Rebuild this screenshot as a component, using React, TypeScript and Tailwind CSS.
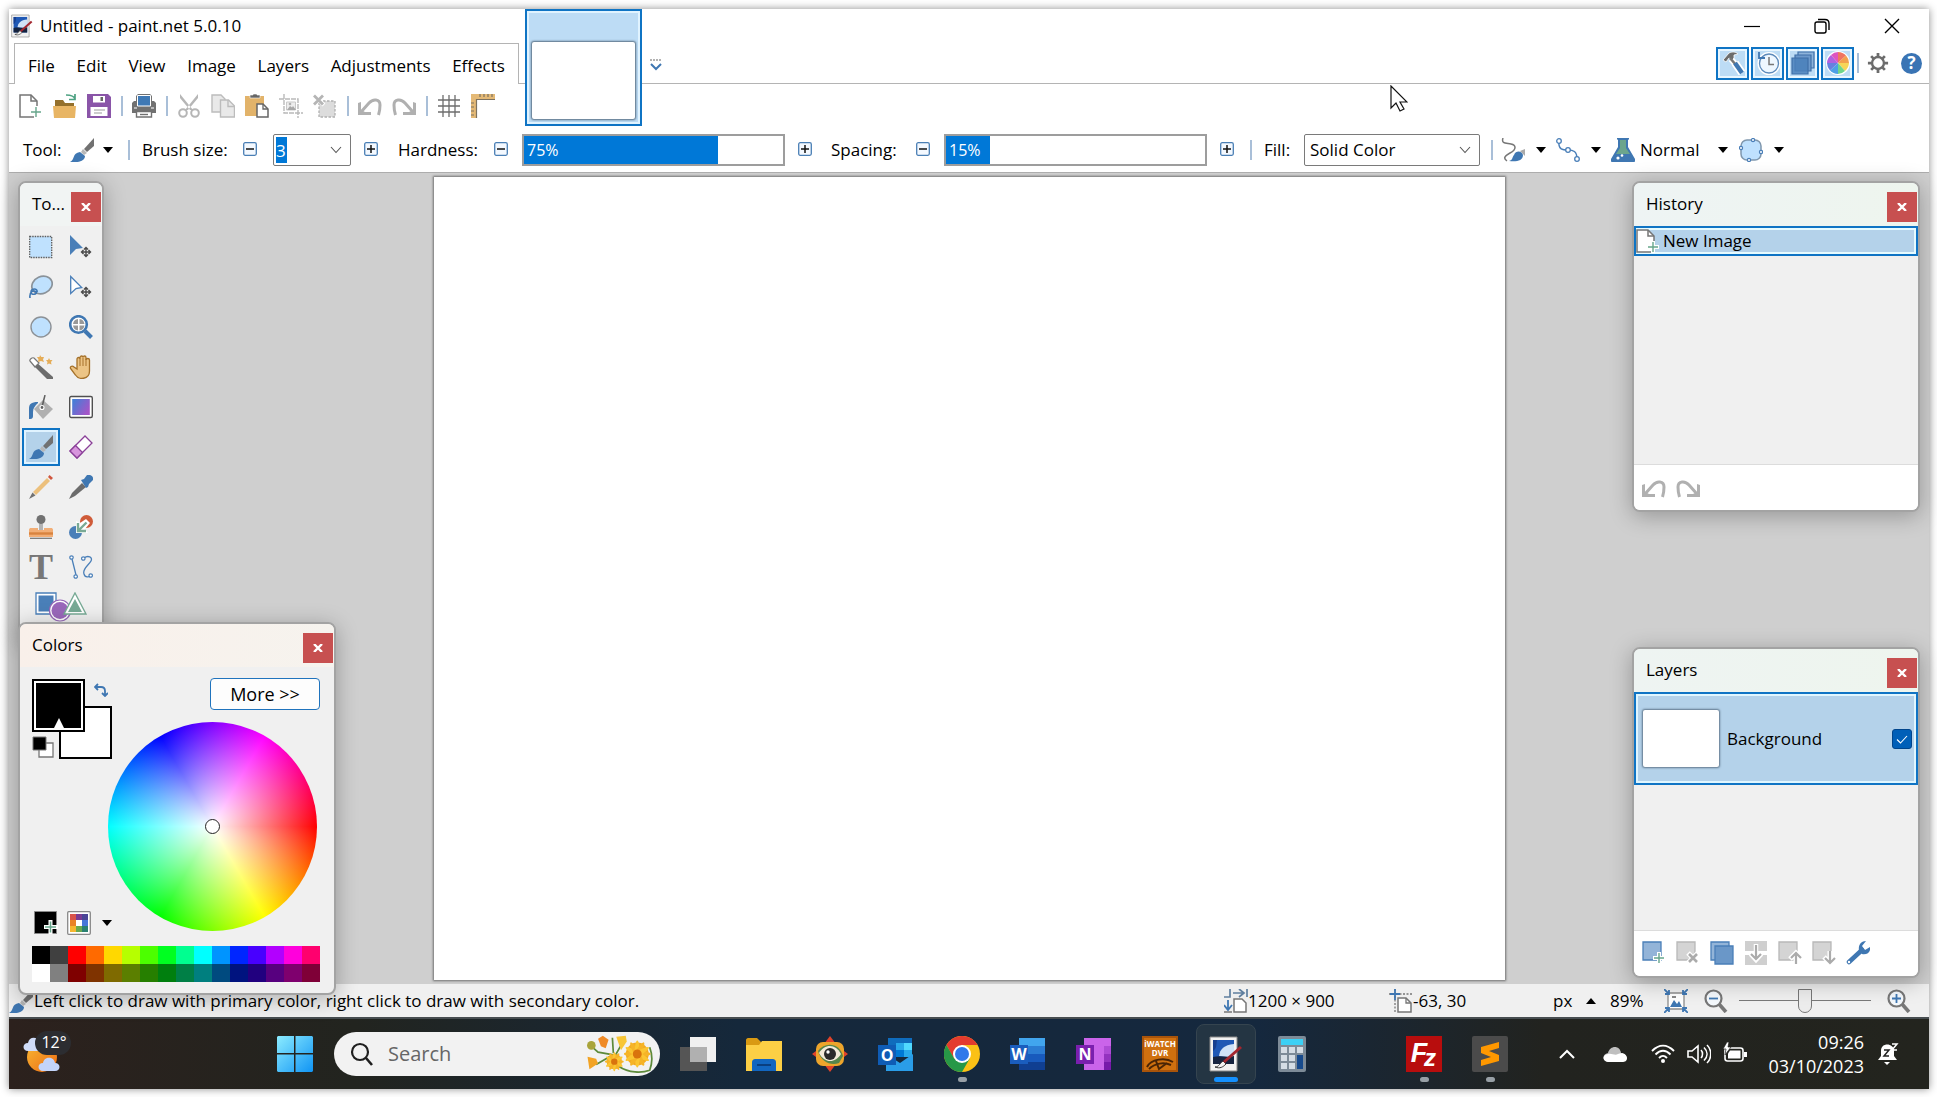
import { ReactNode, useState } from "react";

type Children = { children?: ReactNode };

/* ---------- shared bits ---------- */

function Svg({ children, className = "h-6 w-6" }: Children & { className?: string }) {
    return (
        <svg viewBox="0 0 24 24" fill="none" className={`shrink-0 ${className}`} aria-hidden="true">
            {children}
        </svg>
    );
}

function Separator() {
    return <div className="h-5 w-[2px] shrink-0 bg-[#a9bfd8]" />;
}

function Caret() {
    return (
        <svg viewBox="0 0 10 6" className="h-[6px] w-[10px] shrink-0" aria-hidden="true">
            <path d="M0 0h10L5 6z" fill="#000" />
        </svg>
    );
}

function Chevron() {
    return (
        <svg viewBox="0 0 12 8" className="h-2 w-3 shrink-0" fill="none" aria-hidden="true">
            <path d="M1 1l5 5.5L11 1" stroke="#555" strokeWidth="1.1" />
        </svg>
    );
}

function StepButton({ sign, label }: { sign: "minus" | "plus"; label: string }) {
    return (
        <button type="button" aria-label={label} className="flex h-8 w-5 shrink-0 items-center justify-center pb-[3px]">
            <svg viewBox="0 0 14 14" className="h-[14px] w-[14px]" fill="none">
                <rect x="0.7" y="0.7" width="12.6" height="12.6" rx="1.5" fill="#f4f9ff" stroke="#4a7fb5" strokeWidth="1.3" />
                <path d={sign === "plus" ? "M3 7h8M7 3v8" : "M3 7h8"} stroke="#111" strokeWidth="1.5" />
            </svg>
        </button>
    );
}

/* ---------- icons ---------- */

const PlusMark = ({ x = 17, y = 17 }: { x?: number; y?: number }) => (
    <>
        <path d={`M${x - 6} ${y}h12M${x} ${y - 6}v12`} stroke="#fff" strokeWidth="4" />
        <path d={`M${x - 5} ${y}h10M${x} ${y - 5}v10`} stroke="#67a68c" strokeWidth="1.4" />
    </>
);

const NewIcon = () => (
    <Svg>
        <path d="M1 1h11l6 6v16H1z" fill="#fff" stroke="#757575" strokeWidth="1.5" />
        <path d="M12 1v6h6" stroke="#757575" strokeWidth="1.5" />
        <PlusMark x={17} y={18} />
    </Svg>
);

const OpenIcon = () => (
    <Svg>
        <path d="M2 6h8l2 3h9v4H2z" fill="#94702c" />
        <path d="M0 12h23l-1 12H1z" fill="#e8b564" />
        <path d="M13 1c6 0 8 1 9 4M22 0v5.500h-6" stroke="#4ea283" strokeWidth="1.700" />
    </Svg>
);

const SaveIcon = () => (
    <Svg>
        <path d="M0 0h21l3 3v21H0z" fill="#8a55a8" />
        <path d="M6 2h12v6.500H6z" fill="#fff" />
        <path d="M13.500 3h2.500v4h-2.500z" fill="#666" />
        <path d="M3.500 13h17v9h-17z" fill="#fff" />
        <path d="M7 16h11M7 19h8" stroke="#bdbdbd" strokeWidth="1.300" />
    </Svg>
);

const PrintIcon = () => (
    <Svg>
        <path d="M6 0h12l2 2v10H4V2z" fill="#717171" />
        <path d="M0 9l2-2h20l2 2v10H0z" fill="#717171" />
        <path d="M5.500 1.500h13V12h-13z" fill="#3f79b5" stroke="#fff" strokeWidth="1" />
        <path d="M2 14h3M19 14h3" stroke="#fff" strokeWidth="1.200" />
        <path d="M4.500 17.500h15v5.500h-15z" fill="#fff" stroke="#717171" strokeWidth="1.400" />
        <path d="M8 20.500h8" stroke="#717171" strokeWidth="1.400" />
    </Svg>
);

const CutIcon = () => (
    <Svg>
        <path d="M3 0l13 16h-3L3 4zM21 0L8 16h3L21 4z" fill="#b6b6b6" />
        <circle cx="6" cy="19" r="3.800" stroke="#b6b6b6" strokeWidth="2" />
        <circle cx="18" cy="19" r="3.800" stroke="#b6b6b6" strokeWidth="2" />
    </Svg>
);

const CopyIcon = () => (
    <Svg>
        <path d="M1 1h9l4 4v13H1z" fill="#e9e9e9" stroke="#bcbcbc" strokeWidth="1.4" />
        <path d="M9.500 6h8l6 6v11h-14z" fill="#e9e9e9" stroke="#bcbcbc" strokeWidth="1.4" />
        <path d="M17 6v6.500h6" stroke="#bcbcbc" strokeWidth="1.4" />
    </Svg>
);

const PasteIcon = () => (
    <Svg>
        <path d="M0 2h19v20H0z" fill="#e2b36a" />
        <path d="M5 4V1h3V0h4v1h3v3z" fill="#666" stroke="#fff" strokeWidth="0.600" />
        <path d="M12 10h6l5 5v8H12z" fill="#fff" stroke="#666" strokeWidth="1.5" />
        <path d="M18 10v5h5" stroke="#666" strokeWidth="1.3" />
    </Svg>
);

const CropIcon = () => (
    <Svg>
        <path d="M5 0v19h19" stroke="#b9b9b9" strokeWidth="1.4" strokeDasharray="5 1" />
        <path d="M0 5h19v19" stroke="#b9b9b9" strokeWidth="1.4" strokeDasharray="5 1" />
        <path d="M7.500 8h9v8h-9z" fill="#ededed" stroke="#c9c9c9" />
        <path d="M8 16l3-4 2 1.500 1-1.500 3 4z" fill="#a8a8a8" />
        <circle cx="11" cy="10" r="1.300" fill="#b0b0b0" />
    </Svg>
);

const DeselectIcon = () => (
    <Svg>
        <path d="M6 7h16v16H6z" fill="#dcdcdc" stroke="#b0b0b0" strokeWidth="1.3" strokeDasharray="2.500 1.500" />
        <path d="M0 0l11 11M11 0L0 11" stroke="#fff" strokeWidth="4" />
        <path d="M1 1.500l9 9M10 1.500l-9 9" stroke="#b5b5b5" strokeWidth="2.8" />
    </Svg>
);

const UndoIcon = ({ flip = false }: { flip?: boolean }) => (
    <Svg className={flip ? "h-6 w-6 -scale-x-100" : "h-6 w-6"}>
        <path d="M3 18L11 9c4-4.500 11-4 11 2 0 4-.5 7-1.500 10" stroke="#b0b0b0" strokeWidth="3" />
        <path d="M0 9l3-1v8l4 2h6v3H0z" fill="#b0b0b0" />
    </Svg>
);

const GridIcon = () => (
    <Svg>
        <path d="M6 1v22M12 1v22M18 1v22M1 6h22M1 12h22M1 18h22" stroke="#6d6d6d" strokeWidth="1.3" />
    </Svg>
);

const RulerIcon = () => (
    <Svg>
        <path d="M0 0h24v5.500H6V24H0z" fill="#e4b976" />
        <path d="M24 5.500H5.500V24M9 0v3M13 0v3M17 0v3M21 0v3M0 9h3M0 13h3M0 17h3M0 21h3" stroke="#7d7260" strokeWidth="1.2" />
    </Svg>
);

const BrushIcon = ({ className }: { className?: string }) => (
    <Svg className={className}>
        <path d="M24 0v8l-7 6-3-3z" fill="#717171" />
        <path d="M13 11l4 4-3 2-3-3z" fill="#b7b7b7" />
        <path d="M10 14l5 4c0 5-7 7-15 6 5-2 2-9 10-10z" fill="#3f77b2" />
    </Svg>
);

const MoveMark = () => (
    <path d="M17 12.500v9M12.500 17h9M15 14.500l2-2 2 2M15 19.500l2 2 2-2M14.500 15l-2 2 2 2M19.500 15l2 2-2 2" stroke="#4a4a4a" strokeWidth="1.4" />
);

const TOOLS: { name: string; icon: ReactNode }[] = [
    {
        name: "Rectangle Select",
        icon: <Svg><path d="M.7 1.500h22v21h-22z" fill="#bfe1fe" stroke="#5f5f5f" strokeWidth="1.3" strokeDasharray="1.5 1" /></Svg>,
    },
    {
        name: "Move Selected Pixels",
        icon: <Svg><path d="M1 0l13 13-7 1-6 6z" fill="#4a7fb8" /><MoveMark /></Svg>,
    },
    {
        name: "Lasso Select",
        icon: (
            <Svg>
                <ellipse cx="13" cy="10" rx="10.500" ry="8.500" transform="rotate(-24 13 10)" fill="#bfe1fe" stroke="#8a9299" strokeWidth="1.7" />
                <path d="M8 17c1-4-6-4-6 0s7 2 5 0-7-1-6 6" stroke="#3f77b2" strokeWidth="1.6" />
            </Svg>
        ),
    },
    {
        name: "Move Selection",
        icon: <Svg><path d="M1.700 1.500l11 11-5.700 1-5.300 5z" fill="#fff" stroke="#4a7fb8" strokeWidth="1.3" /><MoveMark /></Svg>,
    },
    { name: "Ellipse Select", icon: <Svg><circle cx="12" cy="12" r="10" fill="#bfe1fe" stroke="#8c9196" strokeWidth="1.4" /></Svg> },
    {
        name: "Zoom",
        icon: (
            <Svg>
                <path d="M16 16l6.500 6.500" stroke="#3f77b2" strokeWidth="4" />
                <circle cx="9.500" cy="9.500" r="8.300" fill="#fff" stroke="#3f77b2" strokeWidth="2.600" />
                <path d="M9 4v5H4c.5-3 2-4.500 5-5zM10.500 4c3 .5 4.500 2 5 5h-5zM4 10.500h5v5c-3-.5-4.500-2-5-5zM10.500 10.500h5c-.5 3-2 4.500-5 5z" fill="#999" />
            </Svg>
        ),
    },
    {
        name: "Magic Wand",
        icon: (
            <Svg>
                <path d="M7 7l17 15v2h-6L4 10z" fill="#6c6c6c" />
                <path d="M1 6c-1-1 2-4 4-3l5 5-4 4z" fill="#fff" stroke="#777" strokeWidth="1.2" />
                <path d="M11 0l1.300 2H15l-1 2.500 1 2.500-3-1-3 1 .5-2.500L8 2h2.500zM20 3l1 2h2.500L22 7l.5 2.500L20 8.500l-2 1 .5-2.500L17 5h2z" fill="#e5ad58" />
            </Svg>
        ),
    },
    {
        name: "Pan",
        icon: (
            <Svg>
                <path d="M8 14V4c0-2 3-2 3 0V2.500c0-2 3-2 3 0 0-2 3-2 3 0V5c0-2 3.500-2 3.500 0v11c0 9-11 9-14 4l-4.500-6c-2-2 1-4 3-2z" fill="#ecc485" stroke="#a5712a" strokeWidth="1.3" />
                <path d="M11 4v7M14 3v8M17 4v7" stroke="#a5712a" strokeWidth="1" />
            </Svg>
        ),
    },
    {
        name: "Paint Bucket",
        icon: (
            <Svg>
                <path d="M14 5l10 9-10 10-9-10z" fill="#b0b0b0" />
                <path d="M9 7c-7 0-9 2-9 7v10c2 0 4 0 4-3v-4c0-4 2-6 5-9z" fill="#3f77b2" />
                <path d="M16 0l-3 12" stroke="#606060" strokeWidth="1.5" />
                <circle cx="13" cy="12.500" r="2" fill="#606060" stroke="#fff" strokeWidth="1.1" />
            </Svg>
        ),
    },
    {
        name: "Gradient",
        icon: (
            <Svg>
                <defs>
                    <linearGradient id="tool-gradient" x1="0" y1="0" x2="1" y2="0.600">
                        <stop offset="0" stopColor="#3b82d8" />
                        <stop offset="1" stopColor="#a356c8" />
                    </linearGradient>
                </defs>
                <rect x="0.700" y="1.500" width="22.600" height="21" rx="1.500" fill="#fff" stroke="#505050" strokeWidth="1.4" />
                <path d="M3.200 4h17.600v16H3.200z" fill="url(#tool-gradient)" />
            </Svg>
        ),
    },
    { name: "Paintbrush", icon: <BrushIcon /> },
    {
        name: "Eraser",
        icon: (
            <Svg>
                <path d="M1 16L16 1l7 7L8 23z" fill="#fff" stroke="#8a3f98" strokeWidth="1.3" />
                <path d="M1 16l5.500-5.500 7 7L8 23z" fill="#d795dd" stroke="#8a3f98" strokeWidth="1.3" />
            </Svg>
        ),
    },
    {
        name: "Pencil",
        icon: (
            <Svg>
                <path d="M4 17L18 3l3 3L7 20z" fill="#ecc07c" />
                <path d="M3.500 17.500l3 3L0 24z" fill="#717171" />
                <path d="M19 2l1.500-2L24 3l-2 2z" fill="#d0563e" />
            </Svg>
        ),
    },
    {
        name: "Color Picker",
        icon: (
            <Svg>
                <path d="M13 8l4 4L6 21l-6 3 3-6z" fill="#6c6c6c" />
                <path d="M12 5l3-1 3-4c4-1 7 2 6 5l-4 4-1 3-2 1z" fill="#3f77b2" />
            </Svg>
        ),
    },
    {
        name: "Clone Stamp",
        icon: (
            <Svg>
                <circle cx="12" cy="4.500" r="4.500" fill="#717171" />
                <path d="M10 9h4v6h-4z" fill="#b3b3b3" />
                <path d="M0 15c0-1.500 1-2 2-2h7v2h6v-2h7c1 0 2 .5 2 2v7H0z" fill="#f2ae76" />
                <path d="M0 18.500h24" stroke="#d8833f" strokeWidth="2.400" />
                <path d="M1 23.300h22" stroke="#717171" strokeWidth="1.200" />
            </Svg>
        ),
    },
    {
        name: "Recolor",
        icon: (
            <Svg>
                <circle cx="17.500" cy="6.500" r="6.500" fill="#cf5b39" />
                <circle cx="6.500" cy="17.500" r="6.500" fill="#4a7fb8" />
                <path d="M7 6l4 2 6-4 4 4-5 6 3 4H7z" fill="#fff" />
                <path d="M9 8v8h8M9.500 15.500l8-8" stroke="#7aaa95" strokeWidth="2.400" />
            </Svg>
        ),
    },
    { name: "Text", icon: <span className="font-['Liberation_Serif'] text-[36px] leading-6 font-bold text-[#777]">T</span> },
    {
        name: "Line / Curve",
        icon: (
            <Svg>
                <path d="M3 4l4 16M15 3c4-3 9-1 7 3s-9 8-7 13c1 4 5 3 7 2" stroke="#4a7fb8" strokeWidth="1.3" />
                <path d="M.8 2.500a1.700 1.700 0 103.400 0 1.700 1.700 0 10-3.400 0M5 21.500a1.700 1.700 0 103.400 0 1.700 1.700 0 10-3.400 0M12.600 3.500a1.700 1.700 0 103.400 0 1.700 1.700 0 10-3.400 0M20 20.500a1.700 1.700 0 103.400 0 1.700 1.700 0 10-3.400 0" fill="#fff" stroke="#4a7fb8" strokeWidth="1.2" />
            </Svg>
        ),
    },
];

const HammerIcon = () => (
    <Svg>
        <path d="M10 8l5 6" stroke="#fff" strokeWidth="6" />
        <path d="M14 12l7 10" stroke="#fff" strokeWidth="8" />
        <path d="M2 9l6-7c4-2 7-1 9 1l-4 1v3l-2 2-3-2-3 4z" fill="#6c6c6c" stroke="#fff" strokeWidth="0.800" />
        <path d="M9 7l6 7" stroke="#777" strokeWidth="2.600" />
        <path d="M14 12l7 10" stroke="#3f77b2" strokeWidth="4.500" />
    </Svg>
);

const ClockIcon = () => (
    <Svg>
        <circle cx="13" cy="12.500" r="9.500" fill="#eef7ff" stroke="#fff" strokeWidth="4" />
        <circle cx="13" cy="12.500" r="9.500" fill="#eef7ff" stroke="#5c8abb" strokeWidth="1.300" />
        <path d="M13 6v7.500h5" stroke="#777" strokeWidth="1.500" />
        <path d="M3 1v6h6" stroke="#3f77b2" strokeWidth="1.800" />
    </Svg>
);

const LayerStackIcon = () => (
    <Svg>
        <path d="M7 1h16v16H7z" fill="#8db3da" stroke="#3f6fa8" strokeWidth="1.2" />
        <path d="M4 4h16v16H4z" fill="#6c99cb" stroke="#3f6fa8" strokeWidth="1.2" />
        <path d="M1 7h16v16H1z" fill="#4a80bb" fillOpacity="0.850" stroke="#3f6fa8" strokeWidth="1.2" />
    </Svg>
);

const ColorsIcon = () => (
    <Svg>
        <circle cx="12" cy="12" r="12" fill="#fff" />
        <path d="M12 12V1a11 11 0 018 3.500z" fill="#f07560" />
        <path d="M12 12l8-7.500A11 11 0 0123 12z" fill="#f2a04d" />
        <path d="M12 12h11a11 11 0 01-4 8z" fill="#f7d557" />
        <path d="M12 12l7 8a11 11 0 01-7 3z" fill="#6fd58a" />
        <path d="M12 12v11a11 11 0 01-8-3.500z" fill="#4d9fe6" />
        <path d="M12 12l-8 7.500A11 11 0 011 12z" fill="#6680e0" />
        <path d="M12 12H1a11 11 0 014-8z" fill="#b060e0" />
        <path d="M12 12L5 4a11 11 0 017-3z" fill="#dd55c0" />
    </Svg>
);

const GearIcon = () => (
    <Svg className="h-[22px] w-[22px]">
        <path d="M12 1v22M1 12h22M4.500 4.500l15 15M19.500 4.500l-15 15" stroke="#6c6c6c" strokeWidth="3" />
        <circle cx="12" cy="12" r="6.500" fill="#fff" stroke="#6c6c6c" strokeWidth="2.600" />
    </Svg>
);

const SmoothIcon = () => (
    <Svg>
        <path d="M2 0c-2 6 3 5 8 6s6 5-1 9-6 6-3 8" stroke="#777" strokeWidth="1.5" />
        <path d="M19 13l5-2v7z" fill="#aaa" />
        <path d="M13 17c2-5 8-4 9 0 0 6-7 7-14 6 4-1 3-4 5-6z" fill="#3f77b2" />
    </Svg>
);

const NodeIcon = () => (
    <Svg>
        <path d="M3 3c-1 9 4 9 9 9s9 1 9 9" stroke="#4a7fb8" strokeWidth="1.5" />
        <g fill="#fff" stroke="#4a7fb8" strokeWidth="1.3">
            <circle cx="3" cy="3" r="2.300" />
            <circle cx="12" cy="12" r="2.300" />
            <circle cx="21" cy="21" r="2.300" />
        </g>
    </Svg>
);

const FlaskIcon = () => (
    <Svg>
        <path d="M7 1v8L0 21c-1 2 0 3 2 3h20c2 0 3-1 2-3L17 9V1z" fill="#3f77b2" />
        <path d="M9 2h6v8l4 6H5l4-6z" fill="#6ba58d" />
        <path d="M6 .8h12" stroke="#3f77b2" strokeWidth="1.600" />
        <circle cx="7" cy="20" r="1.600" fill="#fff" />
        <circle cx="11" cy="17.500" r="1.300" fill="#fff" />
    </Svg>
);

const AntialiasIcon = () => (
    <Svg>
        <rect x="2" y="2" width="20" height="20" rx="6" fill="#bfe1fe" stroke="#7f97ad" strokeWidth="1.5" />
        <g fill="#fff" stroke="#4a7fb8" strokeWidth="1.2">
            <circle cx="14" cy="2" r="1.600" />
            <circle cx="2" cy="10" r="1.600" />
            <circle cx="22" cy="14" r="1.600" />
            <circle cx="10" cy="22" r="1.600" />
        </g>
    </Svg>
);

// Framed photo with a brush leaning across it
const AppArt = () => (
    <>
        <path d="M2 1h27v34H2z" fill="#f2f2f2" stroke="#8a8a8a" />
        <path d="M5 4h21v24H5z" fill="#1f58b5" />
        <path d="M9 4c-1 6 0 8-4 11V4z" fill="#173f8f" />
        <path d="M11 20c1-7 5-11 15-12v14z" fill="#cfe2f7" />
        <path d="M5 21c8-2 14 1 21-1v8H5z" fill="#15233f" />
        <path d="M7 31c4 0 5-4 8-6l3 3c-3 3-6 5-11 3z" fill="#f4f4f4" stroke="#333" />
        <path d="M16 26L33 11" stroke="#a3262f" strokeWidth="3" />
    </>
);

/* ---------- header ---------- */

const MENUS = ["File", "Edit", "View", "Image", "Layers", "Adjustments", "Effects"];

function TitleBar() {
    return (
        <div className="flex h-[34px] items-center pr-[2px] pl-[2px]">
            <svg viewBox="1 0 34 36" className="h-6 w-[22px]" aria-hidden="true"><AppArt /></svg>
            <h1 className="ml-[7px] flex-1 text-[17px]">Untitled - paint.net 5.0.10</h1>
            <button type="button" aria-label="Minimize" className="flex h-full w-[70px] items-center justify-center">
                <svg viewBox="0 0 16 16" className="h-4 w-4"><path d="M0 8.500h16" stroke="#000" strokeWidth="1.2" /></svg>
            </button>
            <button type="button" aria-label="Restore" className="flex h-full w-[70px] items-center justify-center">
                <svg viewBox="0 0 16 16" className="h-4 w-4" fill="none" stroke="#000" strokeWidth="1.4">
                    <rect x="1" y="4" width="11" height="11" rx="2" />
                    <path d="M4 1.500h7c3 0 4 1 4 4V12" />
                </svg>
            </button>
            <button type="button" aria-label="Close" className="flex h-full w-[70px] items-center justify-center">
                <svg viewBox="0 0 16 16" className="h-4 w-4"><path d="M1 1l14 14M15 1L1 15" stroke="#000" strokeWidth="1.4" /></svg>
            </button>
        </div>
    );
}

function MenuBar() {
    const toggles = [
        { name: "Tools", icon: <HammerIcon /> },
        { name: "History", icon: <ClockIcon /> },
        { name: "Layers", icon: <LayerStackIcon /> },
        { name: "Colors", icon: <ColorsIcon /> },
    ];

    return (
        <div className="flex h-[41px]">
            <div className="w-[5px] border-b border-[#b4b4b4]" />
            <nav className="flex w-[505px] items-center justify-between border-x border-t border-[#b4b4b4] px-[13px] pt-1 text-[17px]">
                {MENUS.map((menu) => (
                    <button key={menu} type="button">{menu}</button>
                ))}
            </nav>
            <div className="flex flex-1 items-center justify-end border-b border-[#b4b4b4] pr-[7px]">
                <button type="button" aria-label="Image list" className="mt-1 mr-auto ml-[131px] flex h-6 w-4 items-center">
                    <svg viewBox="0 0 12 12" className="h-3 w-3" fill="none">
                        <path d="M0 1h11" stroke="#666" strokeWidth="1.200" strokeDasharray="2 1" />
                        <path d="M1 5l5 5 5-5" stroke="#3f77b2" strokeWidth="2" />
                    </svg>
                </button>
                <div className="flex gap-[2px]">
                    {toggles.map((toggle) => (
                        <button
                            key={toggle.name}
                            type="button"
                            aria-label={toggle.name}
                            aria-pressed="true"
                            className="flex h-[33px] w-[33px] items-center justify-center border-2 border-[#0f74c4] bg-[#bddcf5] inset-ring-2 inset-ring-[#e8f6ff]"
                        >
                            {toggle.icon}
                        </button>
                    ))}
                </div>
                <div className="mr-2 ml-[3px]"><Separator /></div>
                <button type="button" aria-label="Settings"><GearIcon /></button>
                <button type="button" aria-label="Help" className="ml-3">
                    <span className="flex h-[21px] w-[21px] items-center justify-center rounded-full bg-[#3a74b4] text-[17px] font-bold text-white">?</span>
                </button>
            </div>
        </div>
    );
}

function MainToolbar() {
    const groups: { name: string; icon: ReactNode }[][] = [
        [{ name: "New", icon: <NewIcon /> }, { name: "Open", icon: <OpenIcon /> }, { name: "Save", icon: <SaveIcon /> }],
        [{ name: "Print", icon: <PrintIcon /> }],
        [
            { name: "Cut", icon: <CutIcon /> },
            { name: "Copy", icon: <CopyIcon /> },
            { name: "Paste", icon: <PasteIcon /> },
            { name: "Crop to Selection", icon: <CropIcon /> },
            { name: "Deselect", icon: <DeselectIcon /> },
        ],
        [{ name: "Undo", icon: <UndoIcon /> }, { name: "Redo", icon: <UndoIcon flip /> }],
        [{ name: "Pixel Grid", icon: <GridIcon /> }, { name: "Rulers", icon: <RulerIcon /> }],
    ];

    return (
        <div className="flex h-11 items-center gap-[10px] pl-[10px]">
            {groups.map((group, idx) => (
                <div key={idx} className="flex items-center gap-[10px]">
                    {idx > 0 && <div className="-mr-px"><Separator /></div>}
                    {group.map((item) => (
                        <button key={item.name} type="button" aria-label={item.name}>{item.icon}</button>
                    ))}
                </div>
            ))}
        </div>
    );
}

function PercentSlider({ label, value, fill, labelClass }: { label: string; value: string; fill: number; labelClass: string }) {
    const id = label.toLowerCase();
    return (
        <div className="flex items-center">
            <label htmlFor={id} className={`shrink-0 ${labelClass}`}>{label}:</label>
            <StepButton sign="minus" label={`Decrease ${id}`} />
            <div className="relative mr-[10px] ml-[11px] h-8 w-[263px] border-2 border-[#9d9d9d]">
                <input
                    id={id}
                    type="range"
                    defaultValue={fill}
                    className="block h-full w-full appearance-none [&::-webkit-slider-thumb]:w-0 [&::-webkit-slider-thumb]:appearance-none"
                    style={{ background: `linear-gradient(to right, #0078d7 ${fill}%, #fff ${fill}%)` }}
                />
                <span className="pointer-events-none absolute inset-y-0 left-[3px] flex items-center text-base text-white">{value}</span>
            </div>
            <StepButton sign="plus" label={`Increase ${id}`} />
        </div>
    );
}

function ToolOptions() {
    return (
        <div className="flex h-[45px] items-center border-b border-[#adadad] pl-[14px] text-[17px]">
            <span className="w-[47px]">Tool:</span>
            <button type="button" aria-label="Choose tool" className="mr-[15px] flex items-center gap-[9px]">
                <BrushIcon />
                <Caret />
            </button>
            <Separator />
            <div className="mr-[17px] ml-3 flex items-center">
                <label htmlFor="brush-size" className="w-[98px]">Brush size:</label>
                <StepButton sign="minus" label="Decrease brush size" />
                <div className="mr-[10px] ml-[13px] flex h-8 w-[78px] items-center justify-between rounded-[2px] border border-[#7a7a7a] pr-2 pl-[2px]">
                    <input id="brush-size" defaultValue="3" className="h-[26px] w-[11px] bg-[#0078d7] text-white outline-none" />
                    <Chevron />
                </div>
                <StepButton sign="plus" label="Increase brush size" />
            </div>
            <PercentSlider label="Hardness" value="75%" fill={75} labelClass="w-[93px]" />
            <div className="mr-[13px] ml-4">
                <PercentSlider label="Spacing" value="15%" fill={17} labelClass="w-[82px]" />
            </div>
            <Separator />
            <label htmlFor="fill" className="ml-3 w-10">Fill:</label>
            <div className="relative mr-[11px] flex h-8 w-[176px] items-center rounded-[2px] border border-[#7a7a7a]">
                <select id="fill" className="h-full w-full appearance-none pb-px pl-[5px] outline-none">
                    <option>Solid Color</option>
                    <option>Hatched</option>
                </select>
                <span className="pointer-events-none absolute right-2"><Chevron /></span>
            </div>
            <Separator />
            <div className="ml-2 flex items-center gap-[10px]">
                <button type="button" aria-label="Smoothing" className="flex items-center gap-[11px]"><SmoothIcon /><Caret /></button>
                <button type="button" aria-label="Anchors" className="flex items-center gap-[11px]"><NodeIcon /><Caret /></button>
                <button type="button" className="flex items-center">
                    <FlaskIcon />
                    <span className="ml-[5px] w-[78px] text-left">Normal</span>
                    <Caret />
                </button>
                <button type="button" aria-label="Antialiasing" className="ml-px flex items-center gap-[11px]"><AntialiasIcon /><Caret /></button>
            </div>
        </div>
    );
}

function Header() {
    return (
        <header className="relative bg-white">
            <TitleBar />
            <MenuBar />
            <MainToolbar />
            {/* Open image thumbnail hangs over the three rows */}
            <button
                type="button"
                aria-label="Untitled"
                className="absolute top-0 left-[516px] flex h-[117px] w-[117px] items-end border-2 border-[#0f74c4] bg-[#bddcf5] p-[5px] inset-ring-2 inset-ring-[#e0f3ff]"
            >
                <span className="h-[77px] w-full rounded-[2px] bg-white shadow-[0_0_2px_1px_rgba(60,80,100,0.8)]" />
            </button>
            <ToolOptions />
        </header>
    );
}

/* ---------- floating windows ---------- */

function Panel({ title, className, headClass, children }: Children & { title: string; className: string; headClass: string }) {
    return (
        <section className={`absolute flex flex-col rounded-lg border-2 border-[#a3a3a3] bg-[#f0f0f0] shadow-[0_4px_22px_rgba(0,0,0,0.28)] ${className}`}>
            <header className={`flex h-[43px] shrink-0 items-center justify-between rounded-t-md pr-px pl-3 ${headClass}`}>
                <h2 className="pb-[2px] text-[17px] whitespace-nowrap">{title}</h2>
                <button type="button" aria-label={`Close ${title}`} className="mt-[5px] flex h-[30px] w-[30px] items-center justify-center bg-[#c75050]">
                    <svg viewBox="0 0 10 8" className="h-2 w-[10px]"><path d="M1 0l8 8M9 0L1 8" stroke="#fff" strokeWidth="2.400" /></svg>
                </button>
            </header>
            {children}
        </section>
    );
}

function ToolsPanel() {
    const [active, setActive] = useState("Paintbrush");
    return (
        <Panel title="To..." className="top-2 left-[9px] h-[460px] w-[86px]" headClass="bg-[#f1f4f3]">
            <div className="grid grid-cols-[42px_38px] pt-px">
                {TOOLS.map((tool) => (
                    <button
                        key={tool.name}
                        type="button"
                        aria-label={tool.name}
                        onClick={() => setActive(tool.name)}
                        className="flex h-10 items-center justify-center"
                    >
                        <span
                            className={`flex h-[38px] w-[38px] shrink-0 items-center justify-center ${active === tool.name
                                ? "border-2 border-[#0f74c4] bg-[#b4d2ea] inset-ring-2 inset-ring-[#e0f3ff]"
                                : ""}`}
                        >
                            {tool.icon}
                        </span>
                    </button>
                ))}
            </div>
            <button type="button" aria-label="Shapes" className="mt-[5px] ml-[15px] w-[52px]">
                <svg viewBox="0 0 52 30" className="h-[30px] w-[52px]">
                    <path d="M1 1h20v21H1z" fill="#fff" stroke="#4a7fb8" strokeWidth="1.3" />
                    <path d="M3.500 3.500h15v16h-15z" fill="#4a7fb8" />
                    <circle cx="25" cy="18.500" r="10.500" fill="#fff" stroke="#9566b8" strokeWidth="1.2" />
                    <circle cx="25" cy="18.500" r="8.500" fill="#9a68bb" />
                    <path d="M40 1l11 21H29z" fill="#fff" stroke="#77aa95" strokeWidth="1.4" />
                    <path d="M40 7l7 13H33z" fill="#77aa95" />
                </svg>
            </button>
        </Panel>
    );
}

const PALETTE = [
    "#000000", "#404040", "#ff0000", "#ff6a00", "#ffd800", "#b6ff00", "#4cff00", "#00ff21",
    "#00ff90", "#00ffff", "#0094ff", "#0026ff", "#4800ff", "#b200ff", "#ff00dc", "#ff006e",
    "#ffffff", "#808080", "#7f0000", "#7f3300", "#7f6a00", "#5b7f00", "#267f00", "#007f0e",
    "#007f46", "#007f7f", "#004a7f", "#00137f", "#21007f", "#57007f", "#7f006e", "#7f0037",
];

function ColorsPanel() {
    return (
        <Panel title="Colors" className="bottom-[-11px] left-[9px] w-[318px] pb-[11px]" headClass="bg-linear-to-r from-[#f9f0ea] to-[#f6f3ee]">
            <div className="flex justify-between pr-[14px] pl-3">
                <div className="flex flex-col justify-between pt-3">
                    {/* Primary and secondary swatches overlap */}
                    <div className="relative z-10 h-20 w-20">
                        <button type="button" aria-label="Secondary color" className="absolute right-0 bottom-0 h-[53px] w-[53px] border-2 border-black bg-white" />
                        <button type="button" aria-label="Primary color" className="absolute top-0 left-0 flex h-[53px] w-[53px] items-end justify-center border-2 border-black bg-black inset-ring-2 inset-ring-white">
                            <svg viewBox="0 0 14 12" className="h-3 w-[14px]"><path d="M7 0l6 12H1z" fill="#fff" /></svg>
                        </button>
                        <button type="button" aria-label="Swap colors" className="absolute top-1 right-1">
                            <svg viewBox="0 0 14 14" className="h-[14px] w-[14px]" fill="none" stroke="#3f77b2" strokeWidth="1.8">
                                <path d="M1 4h6c3 0 4 1 4 4v5M4 1L1 4l3 3M8 10l3 3 3-3" />
                            </svg>
                        </button>
                        <button type="button" aria-label="Reset colors" className="absolute top-[57px] left-0">
                            <svg viewBox="0 0 22 22" className="h-[22px] w-[22px]">
                                <path d="M7 7h14v14H7z" fill="#fff" stroke="#777" strokeWidth="1.3" />
                                <path d="M1 1h13v13H1z" stroke="#777" />
                            </svg>
                        </button>
                    </div>
                    <div className="relative z-10 -mb-1 flex items-center gap-[9px] pl-[2px]">
                        <button type="button" aria-label="Add color">
                            <Svg>
                                <path d="M0.500 0.500h22v22h-22z" fill="#000" stroke="#888" />
                                <path d="M10 16h14M16.500 9v14" stroke="#fff" strokeWidth="4" />
                                <path d="M11 16h11M16.500 10.500v11" stroke="#67a68c" strokeWidth="1.500" />
                                <path d="M19 18.500h4V23h-4z" />
                            </Svg>
                        </button>
                        <button type="button" aria-label="Palettes" className="flex items-center gap-[11px]">
                            <Svg>
                                <rect x="0.700" y="0.700" width="22.600" height="22.600" rx="1" fill="#fff" stroke="#888" strokeWidth="1.3" />
                                <path d="M3 3h6v6H3z" fill="#d9534a" /><path d="M9 3h6v6H9z" fill="#7a3b93" /><path d="M15 3h6v6h-6z" fill="#4a4596" />
                                <path d="M3 9h6v6H3z" fill="#e98227" /><path d="M15 9h6v6h-6z" fill="#4676d9" />
                                <path d="M3 15h6v6H3z" fill="#f5b62f" /><path d="M9 15h6v6H9z" fill="#6aa84f" /><path d="M15 15h6v6h-6z" fill="#2a8072" />
                            </Svg>
                            <Caret />
                        </button>
                    </div>
                </div>
                <div className="-ml-4 flex flex-col items-end pt-[11px]">
                    <button type="button" className="h-8 w-[110px] rounded border border-[#1f73bd] bg-[#fdfdfd] text-lg leading-6">More &gt;&gt;</button>
                    <div className="mt-3 mr-[3px] flex h-[209px] w-[209px] items-center justify-center rounded-full bg-[radial-gradient(closest-side,#fff,transparent),conic-gradient(from_90deg,#f00,#ff0,#0f0,#0ff,#00f,#f0f,#f00)]">
                        <div className="h-[15px] w-[15px] rounded-full border border-[#222] bg-white" />
                    </div>
                </div>
            </div>
            <div className="mx-3 mt-[15px] grid w-[288px] grid-cols-16">
                {PALETTE.map((color) => (
                    <button key={color} type="button" aria-label={color} className="h-[18px]" style={{ background: color }} />
                ))}
            </div>
        </Panel>
    );
}

function HistoryPanel() {
    return (
        <Panel title="History" className="top-2 right-[9px] h-[331px] w-[288px]" headClass="bg-linear-to-r from-[#eef4f4] to-[#eef5ee]">
            <ul className="flex-1">
                <li className="flex h-[30px] items-center gap-[3px] border-2 border-[#0f74c4] bg-[#b4d2ea] text-[17px] inset-ring-2 inset-ring-[#e6fbff]">
                    <NewIcon />
                    New Image
                </li>
            </ul>
            <div className="flex h-[46px] items-center gap-[10px] rounded-b-md border-t border-[#dcdcdc] bg-white px-2">
                <button type="button" aria-label="Undo"><UndoIcon /></button>
                <button type="button" aria-label="Redo"><UndoIcon flip /></button>
            </div>
        </Panel>
    );
}

function LayersPanel() {
    const grey = { fill: "#d4d4d4", stroke: "#b8b8b8", strokeWidth: 1.3 };
    const actions: { name: string; icon: ReactNode }[] = [
        { name: "Add layer", icon: <Svg><path d="M1 1h18v18H1z" fill="#93b4d8" stroke="#4a7fb8" strokeWidth="1.3" /><PlusMark x={17} y={17} /></Svg> },
        {
            name: "Delete layer",
            icon: <Svg><path d="M1 1h18v18H1z" {...grey} /><path d="M12 12l10 10M22 12L12 22" stroke="#fff" strokeWidth="5" /><path d="M13 13l8 8M21 13l-8 8" stroke="#ababab" strokeWidth="2.600" /></Svg>,
        },
        { name: "Duplicate layer", icon: <Svg><path d="M1 1h18v18H1z" fill="#93b4d8" stroke="#4a7fb8" strokeWidth="1.3" /><path d="M5 5h18v18H5z" fill="#6a97c8" stroke="#4a7fb8" strokeWidth="1.3" /></Svg> },
        {
            name: "Merge layer down",
            icon: <Svg><path d="M1 0h22v10H1zM1 14h22v10H1z" fill="#cfcfcf" /><path d="M12 3v15M6.500 13l5.500 6 5.500-6" stroke="#fff" strokeWidth="4.500" /><path d="M12 4v14M7 13l5 5 5-5" stroke="#ababab" strokeWidth="2.200" /></Svg>,
        },
        { name: "Move layer up", icon: <Svg><path d="M1 1h18v18H1z" {...grey} /><path d="M18 24V13M12 18l6-6 6 6" stroke="#fff" strokeWidth="5" /><path d="M18 23V12M13 17l5-5 5 5" stroke="#ababab" strokeWidth="2.200" /></Svg> },
        { name: "Move layer down", icon: <Svg><path d="M1 1h18v18H1z" {...grey} /><path d="M18 24V10M12 16l6 6 6-6" stroke="#fff" strokeWidth="5" /><path d="M18 10v12M13 17l5 5 5-5" stroke="#ababab" strokeWidth="2.200" /></Svg> },
        {
            name: "Layer properties",
            icon: <Svg><path d="M3 21L16 9" stroke="#3f77b2" strokeWidth="4.500" strokeLinecap="round" /><path d="M20 0l-4 5 3 4 5-3c1 5-3 8-8 7l-3-3c-1-6 2-10 7-10z" fill="#3f77b2" /><circle cx="3" cy="21" r="1.200" fill="#fff" /></Svg>,
        },
    ];

    return (
        <Panel title="Layers" className="right-[9px] bottom-[6px] h-[331px] w-[288px]" headClass="bg-linear-to-r from-[#eef4f2] to-[#eef5ee]">
            <div className="flex-1">
                <div className="flex h-[93px] items-center border-2 border-[#0f74c4] bg-[#b4d2ea] pr-1 pl-[7px] inset-ring-2 inset-ring-[#e0f6ff]">
                    <div className="h-[57px] w-[76px] rounded-[2px] bg-white shadow-[0_0_2px_1px_rgba(60,80,100,0.7)]" />
                    <label htmlFor="background" className="ml-2 flex-1 text-[17px]">Background</label>
                    <input
                        id="background"
                        type="checkbox"
                        defaultChecked
                        className="h-5 w-5 appearance-none rounded-[3px] border border-[#00458c] bg-[#005fb8]"
                    />
                    <svg viewBox="0 0 20 20" className="pointer-events-none -ml-5 h-5 w-5" fill="none">
                        <path d="M5 10.500l3.500 3.500L15 7" stroke="#fff" strokeWidth="1.1" />
                    </svg>
                </div>
            </div>
            <div className="flex h-[46px] items-center gap-[10px] rounded-b-md border-t border-[#dcdcdc] bg-white px-2 pb-[2px]">
                {actions.map((action) => (
                    <button key={action.name} type="button" aria-label={action.name}>{action.icon}</button>
                ))}
            </div>
        </Panel>
    );
}

function Workspace() {
    return (
        <main className="relative z-10 flex min-h-[811px] flex-1 justify-center bg-[#cfcfcf] pt-1 pb-1">
            <div className="w-[1071px] max-w-full bg-white shadow-[0_0_2px_1px_rgba(90,90,90,0.8)]" />
            <ToolsPanel />
            <ColorsPanel />
            <HistoryPanel />
            <LayersPanel />
        </main>
    );
}

/* ---------- status bar ---------- */

function StatusBar() {
    return (
        <footer className="flex h-[33px] items-center bg-[#f0f0f0] text-[17px]">
            <BrushIcon />
            <p className="ml-px flex-1">Left click to draw with primary color, right click to draw with secondary color.</p>
            <div className="flex w-[165px] items-center">
                <Svg>
                    <path d="M0 8h6V0M23 0v8M9 4h11M15 0l5 4-5 4" stroke="#5f7f9f" strokeWidth="1.7" />
                    <path d="M4 11v9M0 16l4 5 4-5" stroke="#3f77b2" strokeWidth="1.8" />
                    <path d="M0 23h8" stroke="#777" strokeWidth="1.5" />
                    <path d="M10 10h8l4 4v9H10z" fill="#fff" stroke="#757575" strokeWidth="1.5" />
                </Svg>
                1200 × 900
            </div>
            <div className="flex w-[164px] items-center">
                <Svg>
                    <path d="M6 0v24M0 5h24" stroke="#777" strokeWidth="1.3" strokeDasharray="2 1.5" />
                    <path d="M6 0v11M1 5h10" stroke="#3f77b2" strokeWidth="1.8" />
                    <path d="M9 9h8l5 5v9H9z" fill="#fff" stroke="#757575" strokeWidth="1.5" />
                    <path d="M17 9v5h5" stroke="#757575" strokeWidth="1.3" />
                </Svg>
                -63, 30
            </div>
            <button type="button" className="flex w-[57px] items-center gap-[14px]">
                px
                <svg viewBox="0 0 10 6" className="h-[6px] w-[10px]"><path d="M5 0l5 6H0z" /></svg>
            </button>
            <span className="w-[54px]">89%</span>
            <button type="button" aria-label="Fit to window" className="mr-4">
                <Svg>
                    <path d="M4 4h16v16H4z" fill="#fff" stroke="#8d8d8d" strokeWidth="1.3" />
                    <path d="M6 18l4-7 3 4 2-3 3 6z" fill="#3f77b2" />
                    <path d="M8 8h4" stroke="#888" strokeWidth="2" />
                    <path d="M0 0l4 4M24 0l-4 4M0 24l4-4M24 24l-4-4M1 5h4V1M19 1v4h4M1 19h4v4M23 19h-4v4" stroke="#3f77b2" strokeWidth="1.8" />
                </Svg>
            </button>
            <button type="button" aria-label="Zoom out">
                <Svg>
                    <path d="M15 15l7 8" stroke="#777" strokeWidth="3.600" />
                    <circle cx="9.500" cy="9.500" r="8" fill="#f4f8fc" stroke="#777" strokeWidth="2.200" />
                    <path d="M5 9.500h9" stroke="#3f77b2" strokeWidth="1.800" />
                </Svg>
            </button>
            <div className="mr-4 ml-[11px] flex h-6 w-[132px] items-center">
                <input
                    type="range"
                    aria-label="Zoom"
                    className="h-px w-full appearance-none bg-[#7a7a7a] [&::-webkit-slider-thumb]:h-6 [&::-webkit-slider-thumb]:w-[14px] [&::-webkit-slider-thumb]:appearance-none [&::-webkit-slider-thumb]:rounded-b-full [&::-webkit-slider-thumb]:border [&::-webkit-slider-thumb]:border-[#777] [&::-webkit-slider-thumb]:bg-[#ececec]"
                />
            </div>
            <button type="button" aria-label="Zoom in" className="mr-[18px]">
                <Svg>
                    <path d="M15 15l7 8" stroke="#777" strokeWidth="3.600" />
                    <circle cx="9.500" cy="9.500" r="8" fill="#f4f8fc" stroke="#777" strokeWidth="2.200" />
                    <path d="M5 9.500h9M9.500 5v9" stroke="#3f77b2" strokeWidth="1.800" />
                </Svg>
            </button>
        </footer>
    );
}

/* ---------- taskbar ---------- */

function TaskIcon({ name, running = false, active = false, children }: Children & { name: string; running?: boolean; active?: boolean }) {
    return (
        <button
            type="button"
            aria-label={name}
            className={`relative mx-[3px] flex h-[60px] w-[60px] shrink-0 items-center justify-center ${active ? "rounded-lg border border-[#35444f] bg-[#243543]" : ""}`}
        >
            <svg viewBox="0 0 36 36" className="h-9 w-9" aria-hidden="true">{children}</svg>
            {running && <span className="absolute bottom-[2px] h-[5px] w-[9px] rounded-full bg-[#98a0a6]" />}
            {active && <span className="absolute bottom-px h-[5px] w-6 rounded-full bg-[#1490ff]" />}
        </button>
    );
}

const Daisy = ({ x, y, r }: { x: number; y: number; r: number }) => (
    <g transform={`translate(${x} ${y})`}>
        <circle r={r - 2} fill="#f3ab22" />
        {[0, 30, 60, 90, 120, 150].map((angle) => (
            <ellipse key={angle} rx={r} ry={r / 5} fill={angle % 60 ? "#fbc531" : "#f6b427"} transform={`rotate(${angle})`} />
        ))}
        <circle r={r / 3} fill="#d9730d" />
    </g>
);

function Flowers() {
    return (
        <svg viewBox="0 0 72 46" className="h-11 w-[72px]" fill="none" aria-hidden="true">
            <path d="M4 14l8 7 22 4M10 34l14-8M27 6l1 16M36 14l-8 14M34 36c10 7 24 7 32 4 3-8 3-16 0-24" stroke="#5d8a3a" strokeWidth="1.8" />
            <circle cx="5" cy="14" r="4.500" fill="#a9a43a" />
            <path d="M12 7l5-3 6 4-3 9-5-2z" fill="#ef8a26" />
            <path d="M31 5l10-1 1 6-6 9z" fill="#f8c636" />
            <path d="M1 26l9 2 2 5-9 6z" fill="#f2a324" />
            <Daisy x={29} y={31} r={10} />
            <Daisy x={53} y={23} r={14} />
        </svg>
    );
}

function Taskbar() {
    return (
        <footer className="flex h-[72px] items-center border-t-2 border-[#474d50] bg-[linear-gradient(to_right,#2c211d,#22241f_18%,#15283b_38%,#15283e_65%,#22231f_80%,#23241e)] pb-px text-white">
            <button type="button" aria-label="Weather" className="ml-[14px] flex h-[46px] w-[50px] items-start">
                <svg viewBox="0 0 50 46" className="h-[46px] w-[50px]" aria-hidden="true">
                    <defs>
                        <linearGradient id="sun" x1="0" y1="0" x2="1" y2="1">
                            <stop offset="0" stopColor="#f9b934" />
                            <stop offset="1" stopColor="#ec6a12" />
                        </linearGradient>
                    </defs>
                    <circle cx="19" cy="26" r="15" fill="url(#sun)" />
                    <path d="M5 20c-6 0-6-8 0-8 1-7 10-7 12 0 4 1 3 8-1 8z" fill="#cfdcf8" />
                    <path d="M20 40c-6 0-6-8 0-8 1-7 11-7 12 0 6 0 6 8 0 8z" fill="#c3d4fa" />
                    <rect x="12" y="0" width="36" height="24" rx="12" fill="#2c2d31" />
                    <text x="31" y="17" fontSize="16" textAnchor="middle" fill="#fff">12°</text>
                </svg>
            </button>

            <button type="button" aria-label="Start" className="ml-[204px] h-9 w-9 shrink-0">
                <svg viewBox="0 0 36 36" className="h-9 w-9" aria-hidden="true">
                    <defs>
                        <linearGradient id="start" x1="0" y1="0" x2="1" y2="1">
                            <stop offset="0" stopColor="#8cecff" />
                            <stop offset="1" stopColor="#1094f4" />
                        </linearGradient>
                    </defs>
                    <path d="M1 0h16v17H0V1zM18.500 0H35l1 1v16H18.500zM0 18.500h17V36H1l-1-1zM18.500 18.500H36V35l-1 1H18.500z" fill="url(#start)" />
                </svg>
            </button>

            <label className="ml-[21px] flex h-11 w-[326px] shrink-0 items-center overflow-hidden rounded-full bg-[#f2f2f2] pr-[3px] pl-4">
                <Svg>
                    <circle cx="10" cy="10" r="8" stroke="#1f1f1f" strokeWidth="2.200" />
                    <path d="M16 16l6 7" stroke="#1f1f1f" strokeWidth="2.600" />
                </Svg>
                <input aria-label="Search" placeholder="Search" className="ml-[14px] w-0 flex-1 text-[20px] text-[#222] outline-none placeholder:text-[#666]" />
                <Flowers />
            </label>

            <div className="ml-[5px] flex">
                <TaskIcon name="Task view">
                    <path d="M10 1h26v25H10z" fill="#f0f0f0" />
                    <path d="M0 11h27v24H0z" fill="#555" />
                    <path d="M10 11h17v15H10z" fill="#b0b0b0" />
                </TaskIcon>
                <TaskIcon name="File Explorer">
                    <path d="M0 4c0-1 1-2 2-2h9l4 4v4H0z" fill="#d99a12" />
                    <path d="M0 9h13l3-4h20v30H0z" fill="#fccf45" />
                    <path d="M6 35V27c0-3 1-4 4-4h16c3 0 4 1 4 4v8z" fill="#1266c0" />
                    <path d="M11 29h14" stroke="#0a3f80" strokeWidth="2" />
                </TaskIcon>
                <TaskIcon name="Image viewer">
                    <path d="M18 0l6 8h-12zM0 18l8-6v12zM36 18l-8-6v12zM18 36l-6-8h12z" fill="#e0432a" />
                    <rect x="4" y="6" width="28" height="24" rx="7" fill="#eda52c" />
                    <path d="M6 15C13 5 28 7 31 20l-4 7C19 30 9 26 6 15z" fill="#56864c" />
                    <path d="M7 17c6-10 17-9 22 1-6 10-17 9-22-1z" fill="#f3ead9" />
                    <circle cx="18" cy="18" r="6" fill="#2a2a2a" />
                    <circle cx="16" cy="16" r="1.700" fill="#fff" />
                </TaskIcon>
                <TaskIcon name="Outlook">
                    <path d="M10 2h24v18H10z" fill="#0f6cbd" />
                    <path d="M18 7h8v7h-8z" fill="#28a8ea" /><path d="M26 7h8v7h-8z" fill="#50d9ff" />
                    <path d="M18 14h8v7h-8z" fill="#0078d4" /><path d="M26 14h8v7h-8z" fill="#28a8ea" />
                    <path d="M8 18l14 9 13-9v17H8z" fill="#2a9de8" />
                    <path d="M0 9h18v20H0z" fill="#0f5cb5" />
                    <text x="9" y="25" fontSize="16" fontWeight="700" textAnchor="middle" fill="#fff">O</text>
                </TaskIcon>
                <TaskIcon name="Chrome" running>
                    <circle cx="18" cy="18" r="18" fill="#fbc116" />
                    <path d="M2.400 9A18 18 0 0133.600 9H18l-8 13.500z" fill="#e33b2e" />
                    <path d="M2.400 9A18 18 0 0018 36l7.800-13.500-15.600 0z" fill="#279847" />
                    <circle cx="18" cy="18" r="9" fill="#fff" />
                    <circle cx="18" cy="18" r="7" fill="#2f79ea" />
                </TaskIcon>
                <TaskIcon name="Word">
                    <path d="M9 2h26v8H9z" fill="#41a5ee" /><path d="M9 10h26v8H9z" fill="#2b7cd3" />
                    <path d="M9 18h26v8H9z" fill="#185abd" /><path d="M9 26h26v8H9z" fill="#103f91" />
                    <path d="M0 9h18v19H0z" fill="#1a5dbe" />
                    <text x="9" y="24" fontSize="16" fontWeight="700" textAnchor="middle" fill="#fff">W</text>
                </TaskIcon>
                <TaskIcon name="OneNote">
                    <path d="M8 2h27v32H8z" fill="#ca64ea" />
                    <path d="M28 10h7v8h-7z" fill="#ae4bd5" /><path d="M28 18h7v8h-7z" fill="#9332bf" /><path d="M28 26h7v8h-7z" fill="#7719aa" />
                    <path d="M0 9h18v19H0z" fill="#7a1fae" />
                    <text x="9" y="24" fontSize="16" fontWeight="700" textAnchor="middle" fill="#fff">N</text>
                </TaskIcon>
                <TaskIcon name="iWatch DVR">
                    <path d="M0 0h36v36H0z" fill="#a9540a" />
                    <path d="M2 2h32v32H2z" fill="#cf700f" />
                    <text x="18" y="11" fontSize="8" fontWeight="700" textAnchor="middle" fill="#fff">iWATCH</text>
                    <text x="18" y="20" fontSize="8" fontWeight="700" textAnchor="middle" fill="#fff">DVR</text>
                    <path d="M5 31c4-8 18-10 26-5M7 33c6-6 15-7 22-4M14 25l3 8 8-6" stroke="#4a2405" strokeWidth="2" fill="none" />
                </TaskIcon>
                <TaskIcon name="paint.net" active><AppArt /></TaskIcon>
                <TaskIcon name="Calculator">
                    <rect x="4" y="0" width="28" height="36" rx="2" fill="#7d8b98" />
                    <path d="M7 3h22v6H7z" fill="#3cd0f5" />
                    <path d="M7 11h6v6H7zM15 11h6v6h-6zM23 11h6v6h-6zM7 19h6v6H7zM15 19h6v6h-6zM7 27h6v6H7zM15 27h6v6h-6z" fill="#d5dde5" />
                    <path d="M23 19h6v14h-6z" fill="#174a8c" />
                </TaskIcon>
            </div>
            <div className="ml-[66px] flex">
                <TaskIcon name="FileZilla" running>
                    <path d="M0 0h36v36H0z" fill="#b80d0d" />
                    <g fontFamily="Liberation Sans" fontStyle="italic" fontWeight="700" fill="#fff" textAnchor="middle">
                        <text x="13" y="26" fontSize="27">F</text>
                        <text x="24" y="30" fontSize="24">z</text>
                    </g>
                </TaskIcon>
                <TaskIcon name="Sublime Text" running>
                    <rect width="36" height="36" rx="2" fill="#4b4b4b" />
                    <path d="M9 11l18-5v6l-10 3 10 4v6L9 30v-6l10-3-10-4z" fill="#ff9800" />
                </TaskIcon>
            </div>

            <div className="mr-[29px] ml-auto flex items-center">
                <button type="button" aria-label="Show hidden icons" className="mr-7">
                    <svg viewBox="0 0 16 10" className="h-[10px] w-4" fill="none"><path d="M1 9l7-7 7 7" stroke="#fff" strokeWidth="2" /></svg>
                </button>
                <Svg>
                    <path d="M5 20c-6-1-6-8 0-9 2-8 12-8 13 0 7 0 7 9 0 9z" fill="#bfbfbf" />
                    <path d="M5 20c-6-1-6-7 0-8 4-1 7 2 10 0 5-2 9 1 9 4s-2 4-5 4z" fill="#fff" />
                </Svg>
                <button type="button" aria-label="Network, volume and battery" className="ml-6 flex gap-3">
                    <Svg>
                        <path d="M1 9c7-7 15-7 22 0M4.500 12.500c5-5 10-5 15 0M8 16c3-3 5-3 8 0" stroke="#fff" strokeWidth="1.900" />
                        <circle cx="12" cy="19" r="2" fill="#fff" />
                    </Svg>
                    <Svg>
                        <path d="M1 9h4l6-5v16l-6-5H1z" stroke="#fff" strokeWidth="1.600" />
                        <path d="M14 8c2 2 2 6 0 8M17 5.500c4 4 4 9 0 13M20 3c5 5 5 13 0 18" stroke="#fff" strokeWidth="1.600" />
                    </Svg>
                    <Svg>
                        <rect x="2" y="6" width="18" height="13" rx="2.500" stroke="#fff" strokeWidth="1.600" />
                        <path d="M7 8.500h10.500v8H5v-5z" fill="#fff" />
                        <path d="M21 10h3v5h-3z" fill="#fff" />
                        <path d="M4 0L0 7h3l-1 6 6-8H5l1-5z" fill="#fff" stroke="#23231f" strokeWidth="0.700" />
                    </Svg>
                </button>
                <div className="ml-[21px] text-right text-lg leading-6">
                    <div>09:26</div>
                    <div>03/10/2023</div>
                </div>
                <Svg className="ml-3 h-6 w-6">
                    <path d="M2 18l3-4V9c0-9 13-8 13 0v5l3 4z" fill="#fff" />
                    <path d="M8 20h6l-3 3z" fill="#fff" />
                    <path d="M8 8h5l-5 6h5" stroke="#222" strokeWidth="1.500" />
                    <path d="M16 2h5l-5 6h5" stroke="#fff" strokeWidth="1.500" />
                </Svg>
            </div>
        </footer>
    );
}

export default function App() {
    return (
        <div className="flex min-h-screen flex-col bg-white pt-[9px] pr-2 pb-2 pl-[9px] font-['Open_Sans','Noto_Sans',sans-serif] text-black">
            <div className="relative flex flex-1 flex-col shadow-[0_0_8px_rgba(0,0,0,0.45)]">
                <Header />
                <Workspace />
                <StatusBar />
                <Taskbar />
                <svg viewBox="0 0 18 28" className="pointer-events-none absolute top-[76px] left-[1381px] h-7 w-[18px]" aria-hidden="true">
                    <path d="M1 1v22l5-5 4 8 4-2-4-7h7z" fill="#fff" stroke="#111" strokeWidth="1.200" />
                </svg>
            </div>
        </div>
    );
}
